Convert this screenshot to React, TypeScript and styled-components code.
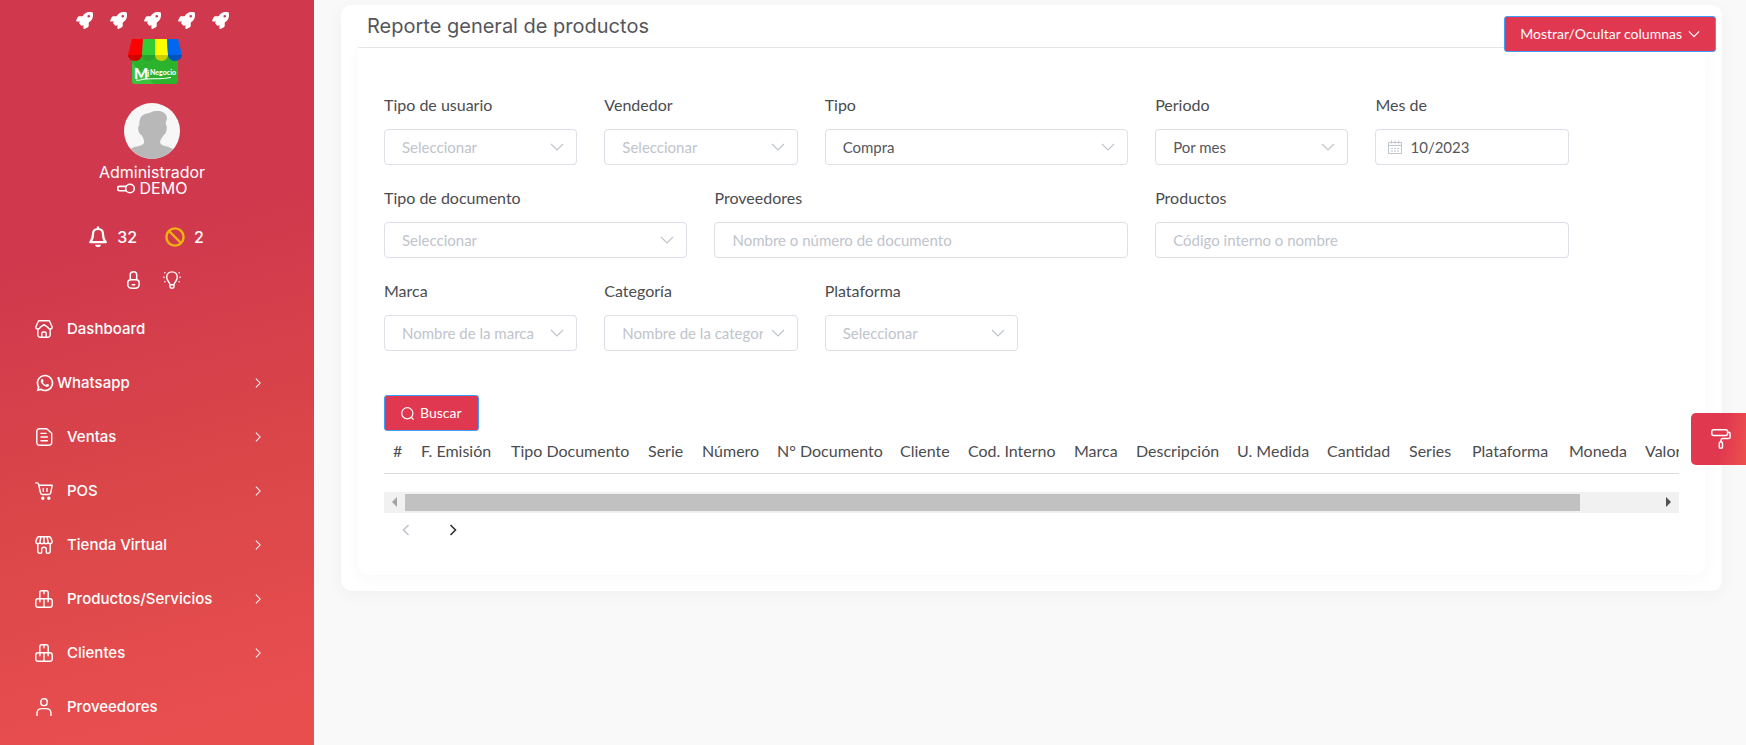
import React from 'react';
import styled, { createGlobalStyle, css } from 'styled-components';
import { FaRocket } from 'react-icons/fa';
import { RiWhatsappLine } from 'react-icons/ri';

const BODY_FONT = `Lato, 'Liberation Sans', sans-serif`;
const MENU_FONT = `Inter, 'Liberation Sans', sans-serif`;

const GlobalStyle = createGlobalStyle`
  *, *::before, *::after { box-sizing: border-box; }
  body {
    margin: 0;
    background: #f9f9f9;
    color: #4b4c50;
    font: 16px/24px ${BODY_FONT};
  }
  button, input, select { font-family: inherit; margin: 0; }
`;

const Page = styled.div`
  display: flex;
  height: 100vh;
  overflow: hidden;
`;

/* ---------- Sidebar ---------- */

const Sidebar = styled.aside`
  flex: 0 0 314px;
  display: flex;
  flex-direction: column;
  padding: 12px 0 0;
  overflow: hidden;
  color: #fff;
  font: 500 15px/16px ${MENU_FONT};
  background: linear-gradient(165deg, #d0384d 32%, #db4749 65%, #e94e4f 95%);
`;

const Profile = styled.div`
  display: flex;
  flex-direction: column;
  align-items: center;
  width: 304px;
`;

const Rockets = styled.div`
  display: flex;
  gap: 17px;
  height: 17px;
  margin-bottom: 10px;
  font-size: 17px;
`;

const LogoLink = styled.a`
  display: block;
  margin: 0 0 19px 6px;
  line-height: 0;
`;

const Avatar = styled.svg`
  margin-bottom: 5px;
  border-radius: 50%;
`;

const UserLine = styled.div`
  display: flex;
  align-items: center;
  gap: 5px;
  height: 16px;
  font-size: 16px;
  font-weight: 400;
`;

const Shortcuts = styled.div`
  display: flex;
  flex-direction: column;
  align-items: center;
  gap: 23px;
  width: 304px;
  padding-top: 31px;
`;

const StatusRow = styled.div`
  display: flex;
  align-items: center;
  gap: 28px;
  height: 20px;
  padding-right: 12px;
`;

const ToggleRow = styled.div`
  display: flex;
  align-items: center;
  gap: 23px;
  height: 20px;
  padding-left: 4px;
`;

const IconButton = styled.button`
  display: flex;
  align-items: center;
  gap: 9px;
  padding: 0;
  border: 0;
  background: none;
  color: inherit;
  font-size: 16px;
  font-weight: 500;
  cursor: pointer;
`;

const Menu = styled.ul`
  list-style: none;
  margin: 12px 0 0;
  padding: 0;
`;

const MenuLink = styled.a<{ $tight?: boolean }>`
  display: flex;
  align-items: center;
  gap: ${(p) => (p.$tight ? 2 : 14)}px;
  height: 54px;
  padding: 0 50px 0 35px;
  color: #fff;
  text-decoration: none;

  & > span {
    flex: 1;
  }
`;

/* ---------- Main ---------- */

const Main = styled.main`
  flex: 1;
  min-width: 0;
  padding: 5px 24px 24px 27px;
`;

const Card = styled.section`
  position: relative;
  padding: 0 17px 16px;
  border-radius: 11px;
  background: #fff;
  box-shadow: 0 4px 18px rgba(0, 0, 0, 0.04);
`;

const CardHeader = styled.header`
  height: 43px;
  padding: 6px 9px 0;
  border-bottom: 1px solid #e6e7e9;
`;

const Title = styled.h1`
  margin: 0;
  font: 400 20px/30px ${MENU_FONT};
  color: #55565a;
`;

const PrimaryButton = styled.button<{ $floating?: boolean }>`
  display: inline-flex;
  align-items: center;
  justify-content: center;
  gap: 6px;
  height: 36px;
  padding: 0 16px;
  border: 1px solid #409eff;
  border-radius: 3px;
  background: #df3850;
  color: #fff;
  font-size: 14px;
  line-height: 16px;
  white-space: nowrap;
  cursor: pointer;
  ${(p) =>
    p.$floating &&
    css`
      position: absolute;
      top: 11px;
      right: 6px;
      padding: 0 15px;
    `}
`;

const CardBody = styled.div`
  padding: 45px 26px 30px;
  border-radius: 0 0 11px 11px;
  box-shadow: 0 4px 18px rgba(0, 0, 0, 0.03);
`;

const Filters = styled.form`
  display: grid;
  grid-template-columns: repeat(12, minmax(0, 1fr));
  gap: 21px 27px;
`;

const Field = styled.div<{ $span: number }>`
  grid-column: span ${(p) => p.$span};
  display: flex;
  flex-direction: column;
  gap: 12px;
`;

const ControlBox = styled.div`
  position: relative;
`;

const controlStyle = css`
  display: block;
  width: 100%;
  height: 36px;
  border: 1px solid #dcdfe6;
  border-radius: 4px;
  background: #fff;
  color: #55575c;
  font-size: 15px;
  outline: none;
`;

const Input = styled.input<{ $pad?: string }>`
  ${controlStyle}
  padding: ${(p) => p.$pad ?? '0 17px'};
  &::placeholder {
    color: #c0c4cc;
    opacity: 1;
  }
`;

const Select = styled.select<{ $empty: boolean }>`
  ${controlStyle}
  appearance: none;
  padding: 0 34px 0 17px;
  ${(p) => p.$empty && 'color: #c0c4cc;'}
`;

const Adornment = styled.span<{ $side: 'left' | 'right' }>`
  position: absolute;
  top: 0;
  bottom: 0;
  ${(p) => (p.$side === 'left' ? 'left: 13px;' : 'right: 13px;')}
  display: flex;
  align-items: center;
  color: #c0c4cc;
  pointer-events: none;
`;

const Actions = styled.div`
  display: flex;
  margin-top: 44px;
`;

const TableClip = styled.div`
  overflow: hidden;
`;

const Table = styled.table`
  width: 1320px;
  table-layout: fixed;
  border-collapse: collapse;
  margin-bottom: 18px;
`;

const Th = styled.th<{ $width: number }>`
  width: ${(p) => p.$width}px;
  height: 42px;
  padding: 8px 0 9px 9px;
  border-bottom: 1px solid #dadbdd;
  font-weight: 400;
  text-align: left;
  white-space: nowrap;
`;

const ScrollBar = styled.div`
  display: flex;
  align-items: center;
  height: 21px;
  background: #f1f1f1;
`;

const ScrollArrow = styled.button<{ $dim?: boolean }>`
  display: flex;
  align-items: center;
  justify-content: center;
  flex: 0 0 21px;
  height: 21px;
  padding: 0;
  border: 0;
  background: none;
  color: ${(p) => (p.$dim ? '#a3a3a3' : '#505050')};
`;

const ScrollTrack = styled.div`
  flex: 1;
  display: grid;
  grid-template-columns: 15fr 1fr;
  height: 17px;
`;

const ScrollThumb = styled.div`
  background: #c1c1c1;
`;

const Pager = styled.nav`
  display: flex;
  gap: 12px;
  padding: 2px 0 0 4px;
`;

const PagerButton = styled.button`
  display: flex;
  align-items: center;
  justify-content: center;
  width: 35px;
  height: 30px;
  padding: 0;
  border: 0;
  background: none;
  color: #303133;
  &:disabled {
    color: #c0c4cc;
  }
`;

const ThemeButton = styled.button`
  position: fixed;
  top: 413px;
  right: 0;
  display: flex;
  align-items: center;
  justify-content: center;
  width: 55px;
  height: 52px;
  padding: 0 0 0 5px;
  border: 0;
  border-radius: 5px 0 0 5px;
  background: linear-gradient(100deg, #e0384f 55%, #ec4e4e 95%);
  color: #fff;
`;

/* ---------- Icons ---------- */

type GlyphProps = { size?: number; width?: number; children: React.ReactNode };

const Glyph = ({ size = 18, width = 1.4, children }: GlyphProps) => (
  <svg
    width={size}
    height={size}
    viewBox="0 0 18 18"
    fill="none"
    stroke="currentColor"
    strokeWidth={width}
    strokeLinecap="round"
    strokeLinejoin="round"
    aria-hidden="true"
  >
    {children}
  </svg>
);

const HomeStoreIcon = () => (
  <Glyph>
    <path d="M3.6.8h10.8L17.2 7c0 1.400-.9 2.100-2 2.100-1.300 0-2-.7-2-1.500L9 4.600 4.800 7.600c0 .8-.7 1.500-2 1.500-1.100 0-2-.7-2-2.100z" />
    <path d="M2.800 9.200v5.600a2.400 2.400 0 0 0 2.400 2.400h7.600a2.400 2.400 0 0 0 2.400-2.400V9.200M6.800 17v-3.400c0-1 .6-1.600 1.400-1.600h1.600c.8 0 1.400.6 1.400 1.600V17" />
  </Glyph>
);
const DocumentIcon = () => (
  <Glyph>
    <path d="M4.400.8h7.300l5 4.400v9.400a2.600 2.600 0 0 1-2.600 2.600H4.400a2.600 2.600 0 0 1-2.600-2.600V3.400A2.600 2.600 0 0 1 4.400.8z" />
    <path d="M6 5.400h5M6 9h6.400M6 12.800h6.400" />
  </Glyph>
);
const CartIcon = () => (
  <Glyph>
    <path d="M.8.900h1.400c.7 0 1.100.4 1.300 1.100l2 8.800c.3 1.100 1 1.700 2 1.700h6.300c1 0 1.700-.6 1.900-1.600l1.500-7.600H3.800M8.300 6.400v3M12 6.400v3" />
    <circle cx="7.800" cy="16.300" r="1" fill="currentColor" />
    <circle cx="13.800" cy="16.300" r="1" fill="currentColor" />
  </Glyph>
);
const StoreIcon = () => (
  <Glyph>
    <path d="M3.800.8h10.400c.8 0 1.200.3 1.500 1l1.500 3.500c0 1.500-.9 2.400-2.100 2.400S13 6.800 13 5.500c0 1.300-.9 2.200-2 2.200S9 6.800 9 5.500c0 1.300-.9 2.200-2 2.200s-2-.9-2-2.200c0 1.300-.9 2.200-2.100 2.200S.8 6.800.8 5.300l1.500-3.500c.3-.7.7-1 1.500-1zM5.900 1 5 5.500M12.100 1l.9 4.500M9 1v4.500" />
    <path d="M2.800 8v7c0 1.400.8 2.200 2 2.200h1c.6 0 .9-.4.9-.9v-3c0-1.300.8-2 2.300-2s2.300.7 2.300 2v3c0 .5.300.9.9.9h1c1.200 0 2-.8 2-2.200V8" />
  </Glyph>
);
const BoxesIcon = () => (
  <Glyph>
    <path d="M4.800 8.800V2.900C4.800 1.600 5.600.8 6.900.8h4.200c1.300 0 2.100.8 2.100 2.100v5.900M9 1v2.800" />
    <path d="M3 8.800h12c1.400 0 2.200.8 2.200 2.200V15c0 1.400-.8 2.200-2.200 2.200H3C1.600 17.200.8 16.400.8 15v-4C.8 9.600 1.600 8.800 3 8.800zM9 8.800v8.400M4.900 9v2.800M13.100 9v2.800" />
  </Glyph>
);
const PersonIcon = () => (
  <Glyph>
    <rect x="5.800" y=".8" width="6.400" height="6.800" rx="2.800" />
    <path d="M2 17.400v-1.900c0-3 1.900-4.900 4.800-4.900h4.400c2.900 0 4.800 1.900 4.800 4.900v1.900" />
  </Glyph>
);
const BellIcon = () => (
  <svg width="20" height="22" viewBox="0 0 20 22" fill="none" stroke="currentColor" strokeWidth="2.200" strokeLinejoin="round" aria-hidden="true">
    <path d="M10 .5v3M10 3C6.700 3 5 5.300 5 8.300c0 4-.9 5.700-2.800 7.900h15.600C15.900 14 15 12.300 15 8.300 15 5.300 13.300 3 10 3z" />
    <path d="M7 18.700h6c-.3 1.500-1.400 2.300-3 2.300s-2.700-.8-3-2.300z" fill="currentColor" stroke="none" />
  </svg>
);
const BanIcon = () => (
  <svg width="20" height="20" viewBox="0 0 20 20" fill="none" stroke="#eeb30f" strokeWidth="2.400" aria-hidden="true">
    <circle cx="10" cy="10" r="8.600" />
    <path d="M4 4l12 12" />
  </svg>
);
const LockIcon = () => (
  <svg width="13" height="18" viewBox="0 0 13 18" fill="none" stroke="#fff" strokeWidth="1.500" strokeLinecap="round" aria-hidden="true">
    <path d="M3.300 8.500V3.600C3.300 1.800 4.600.8 6.500.8s3.200 1 3.200 2.800v4.900" />
    <path d="M4 8.800h5c2 0 3.200 1.200 3.200 3v1.400c0 2.400-1.800 4-4.200 4H5c-2.400 0-4.200-1.600-4.200-4v-1.400c0-1.800 1.200-3 3.200-3zM5.300 13.700h2.400" />
  </svg>
);
const BulbIcon = () => (
  <Glyph>
    <path d="M7 13.700c0-2.300-3.300-3.600-3.300-7.400C3.700 3 6 .9 9 .9s5.300 2.100 5.300 5.400c0 3.800-3.300 5.100-3.300 7.400zM7 13.700v1.900c0 1 .7 1.600 2 1.600s2-.6 2-1.600v-1.900" />
    <path d="M1.800 1.700h.1M.8 6.300h.3M1.800 10.700h.1M16.100 1.700h.1M16.900 6.300h.3M16.100 10.700h.1" />
  </Glyph>
);
const KeyIcon = () => (
  <svg width="18" height="11" viewBox="0 0 18 11" fill="none" stroke="#fff" strokeWidth="1.600" aria-hidden="true">
    <circle cx="13" cy="5.500" r="4.300" />
    <path d="M9 3.400H2.600c-1.200 0-1.800.6-1.800 1.600v1c0 1 .6 1.700 1.800 1.700H9" />
  </svg>
);
const RollerIcon = () => (
  <svg width="20" height="20" viewBox="0 0 20 20" fill="none" stroke="#fff" strokeWidth="1.500" strokeLinejoin="round" aria-hidden="true">
    <rect x=".8" y=".8" width="15.800" height="5.800" rx="2" />
    <path d="M16.600 3.200h1c1 0 1.500.6 1.500 1.500v3.200c0 1-.6 1.700-1.600 1.700h-5.600c-1.200 0-1.900.7-1.900 1.900v1.300" />
    <rect x="8.300" y="13" width="3.200" height="6.200" rx="1.200" />
  </svg>
);

type ChevronProps = { dir: 'down' | 'left' | 'right'; size?: number; width?: number };
const chevronPath = { down: 'M1 4l6 6 6-6', left: 'M9.500 2l-5 5 5 5', right: 'M4.500 2l5 5-5 5' };
const Chevron = ({ dir, size = 14, width = 1.200 }: ChevronProps) => (
  <svg width={size} height={size} viewBox="0 0 14 14" fill="none" stroke="currentColor" strokeWidth={width} aria-hidden="true">
    <path d={chevronPath[dir]} />
  </svg>
);
const CalendarIcon = () => (
  <svg width="14" height="14" viewBox="0 0 14 14" fill="none" stroke="currentColor" aria-hidden="true">
    <path d="M.5 2.500h13v11H.5zM.5 5.500h13M3.500.5v3M10.500.5v3M7 .5v3M3 8.500h2M6 8.500h2M9 8.500h2M3 11h2M6 11h2M9 11h2" />
  </svg>
);
const SearchIcon = () => (
  <svg width="13" height="13" viewBox="0 0 13 13" fill="none" stroke="currentColor" strokeWidth="1.200" aria-hidden="true">
    <circle cx="6.300" cy="6.300" r="5.600" />
    <path d="M10 10l2.600 2.600" />
  </svg>
);

const Logo = () => (
  <svg width="54" height="45" viewBox="0 0 54 45" role="img" aria-label="Mi Negocio">
    <path d="M4 14h46v28a3 3 0 0 1-3 3H7a3 3 0 0 1-3-3z" fill="#2db22d" />
    <path d="M4 24l22 21H7a3 3 0 0 1-3-3z" fill="#3cc33c" />
    <path d="M4 0h11l-1 16H0z" fill="#f00" />
    <path d="M15 0h12v16H14z" fill="#3c3" />
    <path d="M27 0h12l1 16H27z" fill="#ff0" />
    <path d="M39 0h11l4 16H40z" fill="#0067ee" />
    <path d="M0 16h14a7 6 0 0 1-14 0z" fill="#cf0000" />
    <path d="M14 16h13a6.500 6 0 0 1-13 0z" fill="#29a329" />
    <path d="M27 16h13a6.500 6 0 0 1-13 0z" fill="#cfcf00" />
    <path d="M40 16h14a7 6 0 0 1-14 0z" fill="#0053bf" />
    <text x="6" y="40" fill="#fff" fontFamily="Lato" fontWeight="900" fontSize="15">M</text>
    <text x="19" y="38" fill="#fff" fontFamily="Lato" fontWeight="700" fontSize="9">i</text>
    <text x="22" y="36" fill="#fff" fontFamily="Lato" fontWeight="900" fontSize="7">Negocio</text>
    <path d="M8 41c4 1 5-1 10-1 8-.6 16 .4 25-1.500" stroke="#fff" strokeWidth="1" fill="none" />
  </svg>
);

/* ---------- Data ---------- */

const menu = [
  { label: 'Dashboard', icon: <HomeStoreIcon />, expandable: false },
  { label: 'Whatsapp', icon: <RiWhatsappLine size={20} />, expandable: true, tight: true },
  { label: 'Ventas', icon: <DocumentIcon />, expandable: true },
  { label: 'POS', icon: <CartIcon />, expandable: true },
  { label: 'Tienda Virtual', icon: <StoreIcon />, expandable: true },
  { label: 'Productos/Servicios', icon: <BoxesIcon />, expandable: true },
  { label: 'Clientes', icon: <BoxesIcon />, expandable: true },
  { label: 'Proveedores', icon: <PersonIcon />, expandable: false },
];

type FilterDef = {
  id: string;
  label: string;
  span: number;
  kind: 'select' | 'combo' | 'text' | 'month';
  text: string;
  filled?: boolean;
};

const filters: FilterDef[] = [
  { id: 'user-type', label: 'Tipo de usuario', span: 2, kind: 'select', text: 'Seleccionar' },
  { id: 'seller', label: 'Vendedor', span: 2, kind: 'select', text: 'Seleccionar' },
  { id: 'type', label: 'Tipo', span: 3, kind: 'select', text: 'Compra', filled: true },
  { id: 'period', label: 'Periodo', span: 2, kind: 'select', text: 'Por mes', filled: true },
  { id: 'month', label: 'Mes de', span: 2, kind: 'month', text: '10/2023' },
  { id: 'doc-type', label: 'Tipo de documento', span: 3, kind: 'select', text: 'Seleccionar' },
  { id: 'suppliers', label: 'Proveedores', span: 4, kind: 'text', text: 'Nombre o número de documento' },
  { id: 'products', label: 'Productos', span: 4, kind: 'text', text: 'Código interno o nombre' },
  { id: 'brand', label: 'Marca', span: 2, kind: 'combo', text: 'Nombre de la marca' },
  { id: 'category', label: 'Categoría', span: 2, kind: 'combo', text: 'Nombre de la categoría' },
  { id: 'platform', label: 'Plataforma', span: 2, kind: 'select', text: 'Seleccionar' },
];

const columns: [string, number][] = [
  ['#', 28],
  ['F. Emisión', 90],
  ['Tipo Documento', 137],
  ['Serie', 54],
  ['Número', 75],
  ['N° Documento', 123],
  ['Cliente', 68],
  ['Cod. Interno', 106],
  ['Marca', 62],
  ['Descripción', 101],
  ['U. Medida', 90],
  ['Cantidad', 82],
  ['Series', 63],
  ['Plataforma', 97],
  ['Moneda', 76],
  ['Valor', 68],
];

const FilterControl = ({ id, kind, text, filled }: FilterDef) => {
  if (kind === 'select') {
    return (
      <ControlBox>
        <Select id={id} $empty={!filled}>
          <option>{text}</option>
        </Select>
        <Adornment $side="right"><Chevron dir="down" /></Adornment>
      </ControlBox>
    );
  }
  if (kind === 'combo') {
    return (
      <ControlBox>
        <Input id={id} placeholder={text} $pad="0 34px 0 17px" />
        <Adornment $side="right"><Chevron dir="down" /></Adornment>
      </ControlBox>
    );
  }
  if (kind === 'month') {
    return (
      <ControlBox>
        <Adornment $side="left"><CalendarIcon /></Adornment>
        <Input id={id} defaultValue={text} $pad="0 17px 0 34px" />
      </ControlBox>
    );
  }
  return <Input id={id} placeholder={text} />;
};

export default function App() {
  return (
    <Page>
      <GlobalStyle />
      <Sidebar>
        <Profile>
          <Rockets>
            {[0, 1, 2, 3, 4].map((n) => <FaRocket key={n} />)}
          </Rockets>
          <LogoLink href="#inicio"><Logo /></LogoLink>
          <Avatar width="56" height="56" viewBox="0 0 56 56" role="img" aria-label="Usuario">
            <path d="M0 0h56v56H0z" fill="#f7f7f7" />
            <path
              d="M20 40c.5-3-1-5-2.500-8-2-.5-3.500-4-3.300-7 0-1.600.6-2.500 1.300-3-.5-5 1-9.500 5-10.800 2-1 4-1 6-1.800 4-1.700 11-2 14 .8 3 2.600 3 6 1.200 9.300l.3 2.500c.8.500 1 2 .7 4-.3 3-1.500 5.500-3 6-1.500 3-4 5-3.500 8 2 4 8.800 2.600 13 6.500V56H6v-9.500c4-4 12-2.500 14-6.500z"
              fill="#b8b8b8"
            />
          </Avatar>
          <UserLine>Administrador</UserLine>
          <UserLine><KeyIcon /> DEMO</UserLine>
        </Profile>
        <Shortcuts>
          <StatusRow>
            <IconButton aria-label="Notificaciones"><BellIcon /> 32</IconButton>
            <IconButton aria-label="Anulados"><BanIcon /> 2</IconButton>
          </StatusRow>
          <ToggleRow>
            <IconButton aria-label="Bloquear"><LockIcon /></IconButton>
            <IconButton aria-label="Modo claro"><BulbIcon /></IconButton>
          </ToggleRow>
        </Shortcuts>
        <Menu>
          {menu.map((m) => (
            <li key={m.label}>
              <MenuLink href="#" $tight={m.tight}>
                {m.icon}
                <span>{m.label}</span>
                {m.expandable && <Chevron dir="right" size={12} />}
              </MenuLink>
            </li>
          ))}
        </Menu>
      </Sidebar>

      <Main>
        <Card>
          <CardHeader>
            <Title>Reporte general de productos</Title>
          </CardHeader>
          <PrimaryButton $floating>
            Mostrar/Ocultar columnas <Chevron dir="down" size={12} width={1.400} />
          </PrimaryButton>
          <CardBody>
            <Filters>
              {filters.map((f) => (
                <Field key={f.id} $span={f.span}>
                  <label htmlFor={f.id}>{f.label}</label>
                  <FilterControl {...f} />
                </Field>
              ))}
            </Filters>
            <Actions>
              <PrimaryButton><SearchIcon /> Buscar</PrimaryButton>
            </Actions>
            <TableClip>
              <Table>
                <thead>
                  <tr>
                    {columns.map(([name, width]) => <Th key={name} $width={width}>{name}</Th>)}
                  </tr>
                </thead>
              </Table>
            </TableClip>
            <ScrollBar>
              <ScrollArrow $dim aria-label="Desplazar a la izquierda">
                <svg width="5" height="10" viewBox="0 0 5 10"><path d="M5 0v10L0 5z" fill="currentColor" /></svg>
              </ScrollArrow>
              <ScrollTrack><ScrollThumb /></ScrollTrack>
              <ScrollArrow aria-label="Desplazar a la derecha">
                <svg width="5" height="10" viewBox="0 0 5 10"><path d="M0 0v10l5-5z" fill="currentColor" /></svg>
              </ScrollArrow>
            </ScrollBar>
            <Pager aria-label="Paginación">
              <PagerButton disabled aria-label="Anterior"><Chevron dir="left" width={1.600} /></PagerButton>
              <PagerButton aria-label="Siguiente"><Chevron dir="right" width={1.600} /></PagerButton>
            </Pager>
          </CardBody>
        </Card>
      </Main>

      <ThemeButton aria-label="Personalizar tema"><RollerIcon /></ThemeButton>
    </Page>
  );
}
